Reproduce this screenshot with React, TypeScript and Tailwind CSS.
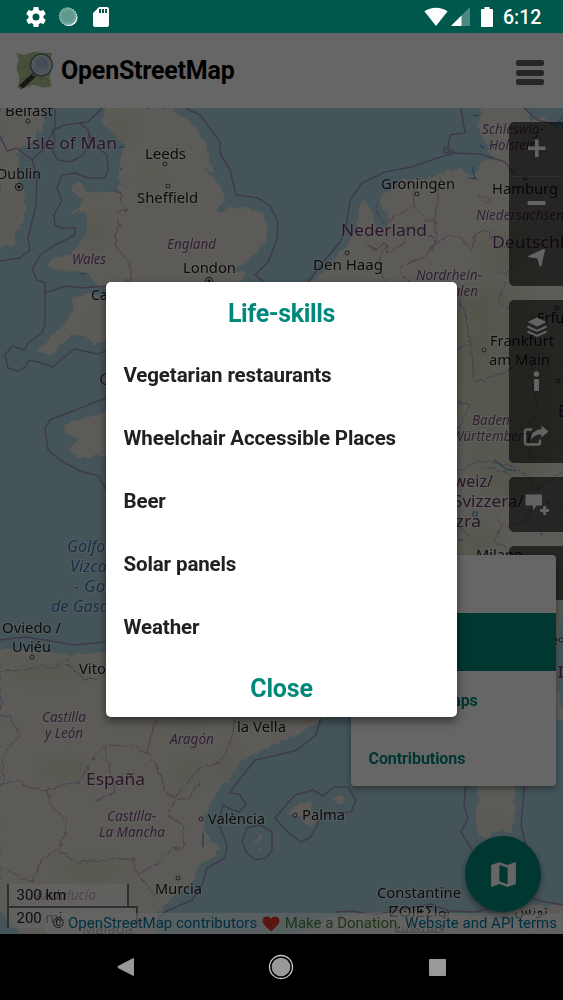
import React from "react";

type LabelKind = "city" | "region" | "country" | "sea" | "faint";
type MapLabel = [text: string, x: number, y: number, width: number, kind: LabelKind];

const labels: MapLabel[] = [
  ["Belfast", 5, 116, 48, "city"],
  ["Leeds", 145, 159, 41, "city"],
  ["Sheffield", 137, 203, 61, "city"],
  ["Dublin", -3, 179, 44, "city"],
  ["London", 183, 273, 53, "city"],
  ["Cardiff", 91, 300, 44, "city"],
  ["Groningen", 381, 189, 74, "city"],
  ["Hamburg", 492, 194, 66, "city"],
  ["Den Haag", 313, 270, 70, "city"],
  ["Erfurt", 537, 323, 38, "city"],
  ["Frankfurt", 490, 346, 64, "city"],
  ["am Main", 489, 365, 61, "city"],
  ["Milano", 476, 560, 47, "city"],
  ["Oviedo /", 2, 633, 59, "city"],
  ["Uviéu", 12, 652, 39, "city"],
  ["Vitoria", 79, 674, 45, "city"],
  ["la Vella", 237, 732, 49, "city"],
  ["València", 208, 824, 57, "city"],
  ["Murcia", 155, 894, 47, "city"],
  ["Málaga", 82, 934, 51, "faint"],
  ["Palma", 302, 820, 43, "city"],
  ["Constantine", 377, 898, 84, "city"],
  ["ⵇⵙⵏⵟⵉⵏⴰ", 389, 917, 58, "city"],
  ["قسنطينة", 393, 933, 52, "faint"],
  ["تونس", 514, 915, 34, "city"],
  ["Firenze", 512, 645, 46, "city"],
  ["England", 167, 249, 49, "region"],
  ["Wales", 72, 264, 34, "region"],
  ["Schleswig-", 482, 134, 62, "region"],
  ["Holstein", 489, 150, 48, "region"],
  ["Niedersachsen", 476, 220, 88, "region"],
  ["Nordrhein-", 416, 280, 66, "region"],
  ["Westfalen", 420, 296, 58, "region"],
  ["Baden-", 472, 425, 42, "region"],
  ["Württemberg", 452, 441, 79, "region"],
  ["Castilla", 42, 722, 44, "region"],
  ["y León", 45, 738, 38, "region"],
  ["Aragón", 170, 744, 44, "region"],
  ["Castilla-", 107, 821, 49, "region"],
  ["La Mancha", 99, 837, 66, "region"],
  ["Andalucía", 36, 900, 60, "region"],
  ["Isle of Man", 26, 149, 91, "country"],
  ["Nederland", 341, 236, 86, "country"],
  ["Deutschland", 492, 248, 104, "country"],
  ["Guernsey", 99, 385, 80, "country"],
  ["Bayern", 558, 417, 58, "country"],
  ["Schweiz/", 427, 487, 66, "country"],
  ["Svizzera/", 453, 507, 71, "country"],
  ["Svizra", 432, 527, 49, "country"],
  ["España", 86, 785, 59, "country"],
  ["Italia", 557, 678, 50, "country"],
  ["Golfo de", 67, 552, 60, "sea"],
  ["Vizcaya", 70, 572, 54, "sea"],
  ["- Golfe", 74, 592, 50, "sea"],
  ["de Gascogne", 51, 612, 92, "sea"],
];

const labelClass: Record<LabelKind, string> = {
  city: "fill-[#202020] text-[14.5px]",
  faint: "fill-[#555] text-[14.5px]",
  region: "fill-[#7c4d80] text-[14px] italic",
  country: "fill-[#683666] text-[17px]",
  sea: "fill-[#4876b0] text-[16px] italic",
};

const towns: [number, number][] = [
  [28, 121], [165, 164], [168, 186], [417, 194], [347, 253], [525, 178], [557, 308], [484, 350],
  [558, 381], [32, 657], [201, 819], [178, 878], [295, 815], [447, 914], [561, 640],
];
const capitals: [number, number][] = [[19, 187], [209, 281]];

const land = [
  "M0 108H40L44 118 42 134 36 130 34 142 22 148 17 153 20 165 19 182 24 192 25 207 23 222 15 235 16 244 0 248Z",
  "M106 108L102 125 115 135 124 145 120 165 118 178 127 187 116 184 121 193 106 191 86 192 82 184 72 184 72 192 84 198 80 207 67 214 86 212 87 230 80 243 70 254 52 260 49 264 56 270 72 272 90 274 97 286 115 288 127 279 134 284 118 300 88 293 72 298 73 313 62 325 50 338 36 352 42 352 51 356 60 346 72 335 85 336 95 345 110 335 240 310 262 290 240 283 246 273 233 270 245 262 258 252 266 238 268 225 262 213 247 208 228 208 222 214 217 210 225 200 222 190 213 178 203 168 216 172 208 160 207 145 195 127 185 118 175 112 173 108Z",
  "M311 282L323 272 338 255 350 242 356 228 360 205 365 200 373 213 376 230 387 226 389 212 381 210 380 196 395 188 403 178 420 180 434 177 447 171 461 168 470 176 478 172 481 162 494 160 488 148 478 125 482 108 524 108 530 120 545 117 555 130 563 124V595L556 655 557 682 560 700 563 715V720H470L445 610 400 640 340 715 321 718 318 723 291 737 262 750 240 762 236 770 228 780 217 792 213 800 205 815 203 827 208 837 220 848 212 857 200 864 194 880 178 894 165 904 157 915 154 934H20L12 923 0 912V648L30 650 70 655 106 652 220 650 230 480 150 465 95 455 80 459 68 449 80 440 65 432 65 425 85 418 106 412 190 390 260 340Z",
  "M475 780L479 800 475 815 478 835 487 840 491 832 500 830 512 833 514 815 515 780Z",
  "M287 815L300 802 311 803 311 811 322 818 312 827 304 823 299 815Z",
  "M332 799L338 794 346 802 342 804Z",
  "M253 842L262 833 263 838 257 844ZM256 850L262 849 261 852Z",
  "M300 934L331 917 365 914 415 908 452 914 485 918 511 912 530 904 548 907 563 903V934Z",
];

const borders = [
  "M102 108L88 122 80 123 65 125 53 130 55 140 53 152 58 160 70 162 82 156 90 142 88 130 80 123M88 130L94 145 107 155 108 170 105 178 88 178 75 173 62 175 57 188 62 200 54 215 55 225 62 228 75 228V235L55 245 40 255 32 270 37 280 45 283V325L42 333 28 343 25 350 12 346 5 355 8 368 18 371 25 367 29 360 42 363 53 367 65 356 75 349 97 354 106 351",
  "M0 136L7 151 17 148 32 160 37 175 36 205 28 238 30 250 20 258 0 261M32 160L43 150 55 128V108",
  "M185 108L200 115 220 142 220 153 230 170 236 195 258 198 270 206 278 222 277 240 268 262 255 275 264 282",
  "M45 293L66 286 82 288 106 286",
  "M106 398L75 410 50 420 45 428 48 450 60 460 80 471 99 476 106 490",
  "M0 640L25 637 45 640 75 645 106 642",
  "M461 108L465 133 450 135 448 147 455 153 440 157 412 167 385 172 362 183 350 200 346 228 340 242 325 260 308 282M444 147V153L451 152ZM455 153L480 154 505 162 515 175",
  "M524 108L537 120 556 124 563 117",
  "M321 718L316 735 297 750 278 755 255 760 229 793 239 794 246 804 239 812 228 808 223 805 218 822 227 845 225 858 207 868 202 885 192 900 165 912 158 920",
  "M242 842L247 828 260 825 272 832 272 850 266 858 255 860 246 852Z",
  "M275 818L295 795 313 790 323 796 334 787 348 787 356 800 351 812 323 814 310 838 300 842 288 832Z",
  "M466 780L464 805 468 818 461 832 472 850M525 780L521 825 528 855",
  "M335 912L352 911 375 915 430 904 450 911 475 912 506 904 525 896 541 901 563 905",
];

const regions = [
  "M115 188L122 195 121 203 127 210 117 212 119 225 115 235 118 250 130 263 131 280",
  "M380 195L376 210 383 223 395 217 415 205 414 190M415 205L425 220 440 224M365 245L375 250 385 242 388 252 404 244 406 228 423 230 435 240M385 282L379 260 386 245",
  "M440 178L437 205 434 225 437 235 434 245 425 257 402 265 400 272 410 282",
  "M434 245L450 235 462 238 472 251 475 235 485 230 490 235 510 250 515 262 506 275 495 270M478 195L492 198 491 204 484 203 478 195",
  "M457 300L465 310 470 345 475 382 490 377 510 370 520 359 535 355M457 402L470 405 458 430M535 355L530 375 538 410 528 427 530 461M470 345L455 350M505 282L498 300 510 312",
  "M457 473L478 461 506 464 528 475 535 491 563 472M480 470L490 467 510 474M495 515L502 525 494 540 512 554M457 525L470 537M506 527L525 522 532 508",
  "M0 672L25 670 42 665 54 668 72 656M65 664L79 674 84 680 98 678M0 716L10 716 20 735 3 755V786",
  "M0 786L18 780 28 788 47 790 60 786 79 783 95 755 108 745 135 746 150 755 162 778 165 793 176 796 200 768 220 762 230 745 236 718M157 718L151 735 147 752M105 748L108 765 115 792 94 802M47 790L50 805 67 821 60 848 40 862 33 882 0 868M55 850L78 862 133 858 137 873 150 888 155 898M137 873L155 866 173 848 181 850M181 850L185 845 182 825 168 815 175 800 190 798 200 780M0 695L3 700 1 710",
];

const forests: [number, number, number, number][] = [
  [122, 128, 11, 17], [150, 175, 8, 14], [96, 232, 9, 19], [92, 325, 5, 10],
  [91, 870, 37, 10], [50, 672, 45, 12], [62, 770, 26, 12], [190, 773, 17, 14], [230, 770, 12, 18],
  [505, 395, 50, 110], [475, 333, 22, 46], [506, 256, 30, 24], [535, 445, 26, 26], [478, 540, 22, 22],
  [480, 300, 18, 18], [11, 220, 5, 22], [554, 610, 15, 40], [493, 827, 8, 10], [185, 725, 20, 8],
];

function MapCanvas() {
  return (
    <svg viewBox="0 108 563 826" className="block h-full w-full bg-[#aad3df] font-['Noto_Sans','DejaVu_Sans',sans-serif]">
      <defs>
        <filter id="coast" x="-5%" y="-5%" width="110%" height="110%">
          <feTurbulence type="fractalNoise" baseFrequency="0.16" numOctaves="2" seed="7" result="noise" />
          <feDisplacementMap in="SourceGraphic" in2="noise" scale="6" xChannelSelector="R" yChannelSelector="G" />
        </filter>
        <filter id="soft" x="-50%" y="-50%" width="200%" height="200%"><feGaussianBlur stdDeviation="8" /></filter>
        <clipPath id="ground">{land.map((d) => <path key={d} d={d} />)}</clipPath>
      </defs>
      <g fill="#e9e4da" filter="url(#coast)">{land.map((d) => <path key={d} d={d} />)}</g>
      <g clipPath="url(#ground)">
        <g filter="url(#soft)">
          {forests.map(([x, y, rx, ry], i) => (
            <ellipse key={i} cx={x} cy={y} rx={rx} ry={ry} fill="#c8d6b4" opacity=".5" />
          ))}
        </g>
      </g>
      <g fill="none" stroke="#4f94c4" strokeWidth="1.2">
        <path d="M119 147h6M120 169h3M80 274h6M480 145l4 3M472 167l3 12M468 178l10 1M474 116l5-1M483 126h6M490 145l4 3M458 520h4M473 512h4v4h-4zM458 540h5M494 460l12 9 10 2M547 503h3M540 534h3M203 833v14" />
      </g>
      <g fill="none" stroke="#a98fba" strokeWidth="1" opacity=".8" filter="url(#coast)">
        {regions.map((d) => <path key={d} d={d} />)}
      </g>
      <g fill="none" stroke="#9c7eb0" strokeWidth="1.5" strokeLinejoin="round" opacity=".8">
        {borders.map((d) => <path key={d} d={d} />)}
      </g>
      <g fill="#eee" stroke="#333" strokeWidth="1">
        {towns.map(([x, y]) => <rect key={`${x}-${y}`} x={x - 1.8} y={y - 1.8} width="3.6" height="3.6" rx="1.2" />)}
        {capitals.map(([x, y]) => (
          <g key={`${x}-${y}`}>
            <circle cx={x} cy={y} r="3.6" />
            <circle cx={x} cy={y} r="1.2" fill="#333" />
          </g>
        ))}
      </g>
      {labels.map(([text, x, y, width, kind]) => (
        <text
          key={text}
          x={x}
          y={y}
          textLength={width}
          lengthAdjust="spacingAndGlyphs"
          className={`${labelClass[kind]} stroke-white/40 stroke-2 [paint-order:stroke]`}
        >
          {text}
        </text>
      ))}
    </svg>
  );
}

function StatusBar() {
  return (
    <div className="flex h-[33px] shrink-0 items-center bg-[#00574b] pl-[24px] pr-[21px] text-white">
      <svg className="size-6" viewBox="0 0 24 24" fill="currentColor">
        <path d="M19.43 12.98c.04-.32.07-.64.07-.98s-.03-.66-.07-.98l2.11-1.65c.19-.15.24-.42.12-.64l-2-3.46c-.12-.22-.39-.3-.61-.22l-2.49 1c-.52-.4-1.08-.73-1.69-.98l-.38-2.65A.49.49 0 0 0 14 2h-4c-.25 0-.46.18-.49.42l-.38 2.65c-.61.25-1.17.59-1.69.98l-2.49-1c-.23-.09-.49 0-.61.22l-2 3.46c-.13.22-.07.49.12.64l2.11 1.65c-.04.32-.07.65-.07.98s.03.66.07.98l-2.11 1.65c-.19.15-.24.42-.12.64l2 3.46c.12.22.39.3.61.22l2.49-1c.52.4 1.08.73 1.69.98l.38 2.65c.03.24.24.42.49.42h4c.25 0 .46-.18.49-.42l.38-2.65c.61-.25 1.17-.59 1.69-.98l2.49 1c.23.09.49 0 .61-.22l2-3.46c.12-.22.07-.49-.12-.64l-2.11-1.65zM12 15.5a3.5 3.5 0 1 1 0-7 3.5 3.5 0 0 1 0 7z" />
      </svg>
      <svg className="ml-[10px] size-5" viewBox="0 0 20 20">
        <circle cx="10.8" cy="10.3" r="8.7" fill="#fff" />
        <circle cx="9.8" cy="9.2" r="8.8" fill="#5e998e" />
        <circle cx="9.8" cy="9.2" r="7.8" fill="none" stroke="#a5c8c1" strokeWidth="2.6" strokeDasharray=".8 1.65" />
      </svg>
      <svg className="ml-[11px] size-6" viewBox="0 0 24 24" fill="currentColor">
        <path d="M18 2h-8L4 8v12c0 1.100.9 2 2 2h12c1.100 0 2-.9 2-2V4c0-1.100-.9-2-2-2zm-6 6h-2V4h2v4zm3 0h-2V4h2v4zm3 0h-2V4h2v4z" />
      </svg>
      <svg className="ml-auto h-[20px] w-[24px]" viewBox="0 0 24 20">
        <path d="M.4 4.300C7-.4 17-.4 23.600 4.300L12 19Z" fill="#fff" />
      </svg>
      <svg className="ml-[3px] size-[19px]" viewBox="0 0 19 19">
        <path d="M0 19L19 0V19Z" fill="#fff" opacity=".3" />
        <path d="M0 19L10.500 8.500V19Z" fill="#fff" />
      </svg>
      <svg className="ml-[11px] h-5 w-3" viewBox="0 0 12 20">
        <path d="M3.500 0h5v2H11q1 0 1 1v16q0 1-1 1H1q-1 0-1-1V3q0-1 1-1h2.500Z" fill="#fff" />
      </svg>
      <span className="ml-[10.500px] mt-[2px] w-[39px] whitespace-nowrap text-[19.500px] font-medium leading-none">6:12</span>
    </div>
  );
}

function Logo() {
  return (
    <svg className="h-[42px] w-[42px]" viewBox="0 0 42 42">
      <path d="M3 2.500Q11 6 17 3T30 3Q36 2 39 3Q37 13 38 21Q35 30 39 36Q31 39 25 36T12 38Q8 38 4 37Q8 30 5 23T6 11Z" fill="#afc993" />
      <path d="M17 3Q19 17 16 37M28 3Q26 20 29 36M6 19Q22 12 38 20M7 30Q21 23 38 31" fill="none" stroke="#93ad7b" strokeWidth=".8" />
      <path d="M8 9L17 14 14 24 7 31M31 27L36 34" fill="none" stroke="#b9a880" strokeWidth="1" />
      <path d="M9 36L21 25" stroke="#3a3a3a" strokeWidth="5" strokeLinecap="round" />
      <path d="M6.500 37l3 2" stroke="#c58f35" strokeWidth="2" />
      <path d="M20 26l3-3" stroke="#999" strokeWidth="3" />
      <circle cx="28.500" cy="15" r="10.800" fill="#bfd3da" stroke="#5d6770" strokeWidth="1.200" />
      <circle cx="28.500" cy="15" r="9.600" fill="none" stroke="#dfe9ed" strokeWidth=".8" />
      <path d="M22 11Q28 5 33 10T31 18Q25 20 22 11" fill="#a9c0d9" />
    </svg>
  );
}

function Header() {
  return (
    <header className="flex h-[75px] shrink-0 items-center bg-white pl-[13px] pr-[19.500px]">
      <Logo />
      <h1 className="ml-[6px] whitespace-nowrap text-[25px] font-bold leading-none tracking-[-0.22px] text-black">OpenStreetMap</h1>
      <div className="ml-auto mt-[4px] flex w-[28px] flex-col gap-[3.500px]">
        <i className="h-[6px] rounded-[2px] bg-[#606060]" />
        <i className="h-[6px] rounded-[2px] bg-[#606060]" />
        <i className="h-[6px] rounded-[2px] bg-[#606060]" />
      </div>
    </header>
  );
}

function Control({ children, divided = false }: { children: React.ReactNode; divided?: boolean }) {
  return (
    <div className={`flex h-[54.500px] items-center justify-center ${divided ? "border-b border-white/15" : ""}`}>
      <svg className="size-[26px]" viewBox="0 0 26 26" fill="currentColor">{children}</svg>
    </div>
  );
}

function MapControls() {
  return (
    <div className="absolute right-0 top-[14px] flex w-[54px] flex-col gap-[14px] text-white/95 [&>div]:rounded-l-[5px] [&>div]:bg-black/60">
      <div>
        <Control divided><path d="M12 3.500h3.500v7h7V14h-7v7H12v-7H5v-3.500h7Z" /></Control>
        <Control><rect x="4.500" y="10" width="18" height="4" rx="1" /></Control>
        <Control><path d="M22 5L18.500 21q-.9 1-1.900 0l-2.300-7.500L5.700 12.300q-1-.8 0-1.500L20.500 4Q22 3.500 22 5Z" /></Control>
      </div>
      <div>
        <Control>
          <path d="M14 3.500l9.500 4.500-9.500 4.500L4.500 8Z" />
          <path d="M4.500 12.500L14 17l9.500-4.500M4.500 17.500L14 22l9.500-4.500" fill="none" stroke="currentColor" strokeWidth="2" />
        </Control>
        <Control><circle cx="13.500" cy="6" r="2.700" /><rect x="11" y="11" width="5" height="12" rx="1" /></Control>
        <Control>
          <path d="M9 6.500H4q-2 0-2 2v11q0 2 2 2h11q2 0 2-2v-3" fill="none" stroke="currentColor" strokeWidth="2.400" />
          <path d="M18.500 2.500L25.500 8.500 18.500 14.500V11.500Q11 11 8 17 7.500 7.500 18.500 6Z" />
        </Control>
      </div>
      <div>
        <Control>
          <path d="M3 3.500h15q1 0 1 1v10h-5.500l-3.500 5v-5H4q-1.500 0-1.500-1.500V4.500q0-1 .5-1Z" />
          <path d="M20.200 15h3v3h3v3h-3v3h-3v-3h-3v-3h3Z" />
        </Control>
      </div>
      <div><Control>{null}</Control></div>
    </div>
  );
}

function ScaleBar() {
  return (
    <div className="absolute bottom-[6px] left-[7px] text-[15px] leading-none text-[#222]">
      <div className="flex h-[22px] w-[122px] items-center border-x-2 border-[#777] bg-white/50 pl-[7.500px]">300 km</div>
      <div className="flex h-[22px] w-[131px] items-center border-x-2 border-t-2 border-[#777] bg-white/50 pl-[7.500px]">200 mi</div>
    </div>
  );
}

function Attribution() {
  return (
    <div className="absolute bottom-0 right-0 flex h-[21px] w-[518px] items-center justify-between whitespace-nowrap bg-white/60 pl-[7.500px] pr-[6px] text-[15px] leading-none text-[#333]">
      <span>© <a className="text-[#0078a8]">OpenStreetMap contributors</a></span>
      <svg className="h-[16px] w-[18px]" viewBox="0 0 18 16">
        <path d="M9 15.500C6 12 .5 9 .5 4.800.5 0 7-1 9 3c2-4 8.500-3 8.500 1.800C17.500 9 12 12 9 15.500Z" fill="#e33629" />
      </svg>
      <span><a className="text-[#448a3e]">Make a Donation</a>. <a className="text-[#0078a8]">Website and API terms</a></span>
    </div>
  );
}

function SideMenu() {
  return (
    <nav className="absolute bottom-[148px] right-[7px] grid h-[231px] w-[205px] grid-rows-4 overflow-hidden rounded-[4px] bg-white text-[16px] font-bold tracking-[-0.08px] text-[#00897b] shadow-[0_3px_6px_rgba(0,0,0,0.4)] [&>div]:flex [&>div]:items-center [&>div]:pl-[17.500px] [&>div]:pt-[3px]">
      <div>Map</div>
      <div className="bg-[#00897b] text-white">Life-skills</div>
      <div><span className="flex w-[109px] justify-end whitespace-nowrap tracking-[-0.2px]">Thematic maps</span></div>
      <div>Contributions</div>
    </nav>
  );
}

function MapButton() {
  return (
    <button className="absolute bottom-[22px] right-[22px] flex size-[76px] items-center justify-center rounded-full bg-[#00897b] text-white shadow-[0_3px_7px_rgba(0,0,0,0.45)]">
      <svg className="size-[33px]" viewBox="0 0 24 24" fill="currentColor">
        <path d="M20.500 3l-.16.03L15 5.100 9 3 3.360 4.900c-.21.07-.36.25-.36.48V20.500c0 .28.22.5.5.5l.16-.03L9 18.900l6 2.100 5.640-1.900c.21-.07.36-.25.36-.48V3.500c0-.28-.22-.5-.5-.5zM15 19l-6-2.110V5l6 2.110V19z" />
      </svg>
    </button>
  );
}

const skills = ["Vegetarian restaurants", "Wheelchair Accessible Places", "Beer", "Solar panels", "Weather"];

function SkillsDialog() {
  return (
    <div className="absolute inset-0 flex items-start justify-center bg-black/60 pt-[249px]">
      <section className="flex h-[435px] w-[351px] flex-col rounded-[5px] bg-white shadow-[0_4px_10px_rgba(0,0,0,0.5)]">
        <h2 className="flex h-[62px] items-center justify-center pt-[2px] text-[25px] font-bold tracking-[-0.35px] text-[#00897b]">Life-skills</h2>
        <ul>
          {skills.map((skill) => (
            <li key={skill} className="flex h-[63px] items-center pl-[17.500px] text-[20.500px] font-bold tracking-[-0.12px] text-[#212121]">{skill}</li>
          ))}
        </ul>
        <button className="flex h-[58px] items-center justify-center pt-[2px] text-[25px] font-bold tracking-[-0.2px] text-[#00897b]">Close</button>
      </section>
    </div>
  );
}

function NavigationBar() {
  return (
    <div className="grid h-[66px] shrink-0 grid-cols-3 items-center justify-items-center bg-black px-[48px]">
      <svg className="size-6" viewBox="0 0 24 24"><path d="M19.500 3.500v17L4 12.500v-1Z" fill="#999" stroke="#999" strokeLinejoin="round" /></svg>
      <svg className="size-[26px]" viewBox="0 0 26 26"><circle cx="13" cy="13" r="11.500" fill="none" stroke="#c9c9c9" strokeWidth="1.300" /><circle cx="13" cy="13" r="9.300" fill="#999" /></svg>
      <i className="size-[17px] rounded-[1px] bg-[#999]" />
    </div>
  );
}

export default function App() {
  return (
    <div className="flex h-[1000px] w-[563px] flex-col overflow-hidden font-['Roboto',sans-serif]">
      <StatusBar />
      <main className="relative flex min-h-0 flex-1 flex-col">
        <Header />
        <div className="relative min-h-0 flex-1 overflow-hidden">
          <MapCanvas />
          <MapControls />
          <ScaleBar />
          <Attribution />
          <SideMenu />
          <MapButton />
        </div>
        <SkillsDialog />
      </main>
      <NavigationBar />
    </div>
  );
}
